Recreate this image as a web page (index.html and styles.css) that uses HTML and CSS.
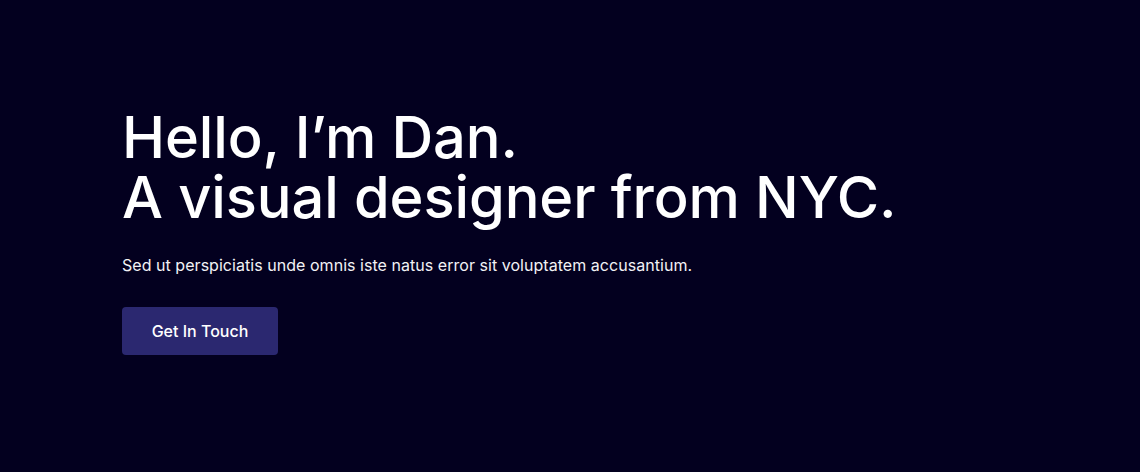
FILE: index.html
```html
<!DOCTYPE html>
<html lang="en">
<head>
<meta charset="utf-8">
<title>Dan</title>
<link rel="stylesheet" href="styles.css">
</head>
<body>
<section class="hero">
  <h1 class="hero-title">Hello, I’m Dan.<br>A visual designer from NYC.</h1>
  <p class="hero-text">Sed ut perspiciatis unde omnis iste natus error sit voluptatem accusantium.</p>
  <a class="hero-btn" href="#">Get In Touch</a>
</section>
</body>
</html>
```

FILE: styles.css
```css
html, body {
  margin: 0;
  padding: 0;
  background: #03001f;
  height: 100%;
}
body {
  font-family: Inter, "Noto Sans", sans-serif;
  color: #ffffff;
}
.hero {
  padding: 107px 0 0 122px;
  display: flex;
  flex-direction: column;
  align-items: flex-start;
}
.hero-title {
  margin: 0;
  font-size: 57.8px;
  line-height: 60px;
  font-weight: 500;
  letter-spacing: -0.1px;
}
.hero-text {
  margin: 26px 0 0;
  font-size: 16px;
  line-height: 24px;
  color: #f2f2f5;
  letter-spacing: 0.04px;
}
.hero-btn {
  margin-top: 30px;
  width: 156px;
  height: 48px;
  box-sizing: border-box;
  display: flex;
  align-items: center;
  justify-content: center;
  background: #2b2870;
  border-radius: 4px;
  color: #fff;
  text-decoration: none;
  font-size: 16px;
  font-weight: 500;
}
```
